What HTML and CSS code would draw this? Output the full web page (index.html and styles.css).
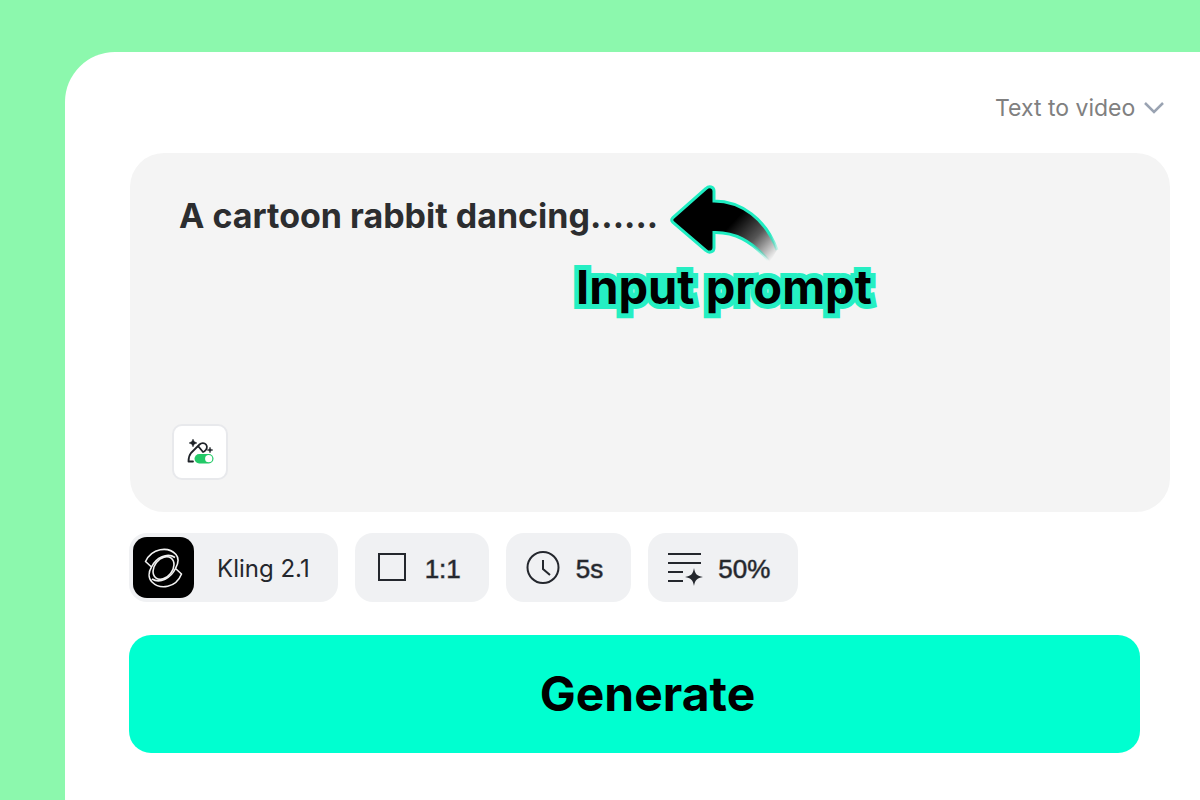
FILE: index.html
```html
<!DOCTYPE html>
<html lang="en">
<head>
    <meta charset="UTF-8">
    <meta name="viewport" content="width=device-width, initial-scale=1.0">
    <title>Text to video</title>
    <link rel="stylesheet" href="styles.css">
</head>
<body>

    <main class="panel">
        <form class="generator">
            <!-- Mode switch -->
            <div class="mode">
                <select class="mode-select" aria-label="Mode">
                    <option>Text to video</option>
                </select>
                <svg class="mode-arrow" viewBox="0 0 20 20" aria-hidden="true">
                    <path d="M1 5l9 9 9-9" fill="none" stroke="#9aa3b2" stroke-width="2.500"/>
                </svg>
            </div>

            <!-- Prompt box -->
            <div class="prompt-box">
                <textarea class="prompt" aria-label="Prompt" spellcheck="false">A cartoon rabbit dancing......</textarea>
                <button class="enhance" type="button" aria-label="Enhance prompt">
                    <svg viewBox="0 0 28 28" aria-hidden="true">
                        <g fill="none" stroke="#1f2329" stroke-width="1.800" stroke-linejoin="round" stroke-linecap="round">
                            <path d="M7 23.500H2.500C2.500 19.500 3 17.500 5 15L13.500 6.500C15.500 4.500 18.500 4.800 20 6.500C21.700 8.500 21 11.500 18.500 13.200L17 14L12.500 8.500"/>
                        </g>
                        <path d="M7 1l1.200 2.600L11 5 8.200 6.200 7 9 5.800 6.200 3 5l2.800-1.400zM24 9l.8 2.200L27 12l-2.200.8L24 15l-.8-2.200L21 12l2.200-.8z" fill="#1f2329" stroke="#1f2329" stroke-width=".4"/>
                        <rect x="8.500" y="16" width="19" height="9.500" rx="4.700" fill="#22c967"/>
                        <circle cx="22.700" cy="20.700" r="3.600" fill="#fff"/>
                    </svg>
                </button>

                <!-- Hint drawn over the box -->
                <div class="hint">
                    <svg class="hint-arrow" viewBox="0 0 110 80" aria-hidden="true">
                        <defs>
                            <linearGradient id="fade" gradientUnits="userSpaceOnUse" x1="67" y1="35" x2="106" y2="72">
                                <stop offset="0" stop-color="#000"/>
                                <stop offset="0.5" stop-color="#000" stop-opacity="0.65"/>
                                <stop offset="1" stop-color="#000" stop-opacity="0"/>
                            </linearGradient>
                            <linearGradient id="edge" gradientUnits="userSpaceOnUse" x1="92" y1="54" x2="104" y2="74">
                                <stop offset="0" stop-color="#1fedc2"/>
                                <stop offset="1" stop-color="#1fedc2" stop-opacity="0"/>
                            </linearGradient>
                        </defs>
                        <path d="M4 33.500Q1.500 36 4 38.500L37 66.500C40 69.500 45 68 45 64V48.500C65 48 82 56 101 78L108 66C99 37 72 16 45 17V7C45 2.500 40 1.500 37 4.500Z" fill="url(#fade)"/>
                        <path d="M101 78C82 56 65 48 45 48.500V64C45 68 40 69.500 37 66.500L4 38.500Q1.500 36 4 33.500L37 4.500C40 1.500 45 2.500 45 7V17C72 17 97 35 108 66" fill="none" stroke="url(#edge)" stroke-width="3"/>
                    </svg>
                    <span class="hint-text">Input prompt</span>
                </div>
            </div>

            <!-- Settings -->
            <div class="options">
                <button class="option model" type="button">
                    <span class="model-logo">
                        <svg viewBox="0 0 40 40" aria-hidden="true">
                            <g fill="none" stroke="#f2f2f2" stroke-width="1.600" stroke-linejoin="round">
                                <ellipse cx="19.500" cy="20" rx="9" ry="12.500" transform="rotate(38 19.500 20)"/>
                                <path d="M7.500 19L1.500 13.500C8 0 24 -2 32 6.500C35 10 34.500 15 31.500 20.500L37.500 26C32 40 16 42 8 34C4 30 4.500 24 7.500 19C12 10 23 4 31 9.500M31.500 20.500C27 30 16 36 8 31"/>
                            </g>
                        </svg>
                    </span>
                    <span class="model-name">Kling 2.1</span>
                </button>
                <button class="option value" type="button">
                    <svg viewBox="0 0 36 36" aria-hidden="true">
                        <rect x="5" y="4" width="26" height="26" fill="none" stroke="#24272d" stroke-width="2"/>
                    </svg>
                    <span>1:1</span>
                </button>
                <button class="option value" type="button">
                    <svg viewBox="0 0 36 36" aria-hidden="true">
                        <g fill="none" stroke="#24272d" stroke-width="2">
                            <circle cx="18" cy="17.500" r="15.500"/>
                            <path d="M18 10v9l7 6"/>
                        </g>
                    </svg>
                    <span>5s</span>
                </button>
                <button class="option value" type="button">
                    <svg viewBox="0 0 36 36" aria-hidden="true">
                        <path d="M1 4h33M1 13h33M1 22h15M1 31h15" stroke="#24272d" stroke-width="2"/>
                        <path d="M27 18C28 24 30 26 36 27C30 28 28 30 27 36C26 30 24 28 18 27C24 26 26 24 27 18Z" fill="#24272d"/>
                    </svg>
                    <span>50%</span>
                </button>
            </div>

            <button class="generate" type="submit">Generate</button>
        </form>
    </main>

</body>
</html>
```
FILE: styles.css
```css
* {
    box-sizing: border-box;
}

body {
    margin: 0;
    background-color: #8cf8ad;
    font-family: Inter, sans-serif;
    color: #24272d;
}

button, select, textarea {
    margin: 0;
    padding: 0;
    border: none;
    background: none;
    font-family: inherit;
    color: inherit;
}

button {
    cursor: pointer;
}

.panel {
    min-height: calc(100vh - 52px);
    margin: 52px 0 0 65px;
    padding: 36px 30px 40px 64px;
    background-color: #fff;
    border-top-left-radius: 50px;
}

.generator {
    display: flex;
    flex-direction: column;
}

/* Mode switch */
.mode {
    display: flex;
    align-items: center;
    align-self: flex-end;
    gap: 8px;
    height: 40px;
    margin: 0 6px 25px 0;
}

.mode-select {
    appearance: none;
    font-size: 23px;
    font-weight: 400;
    color: #808080;
}

.mode-arrow {
    width: 20px;
    height: 20px;
}

/* Prompt box */
.prompt-box {
    position: relative;
    display: flex;
    flex-direction: column;
    align-items: flex-start;
    min-height: 359px;
    margin-left: 1px;
    padding: 40px 42px 32px;
    background-color: #f4f4f4;
    border-radius: 34px;
}

.prompt {
    flex: 1;
    width: 100%;
    padding: 0 7px;
    font-size: 34px;
    font-weight: 700;
    line-height: 46px;
    color: #2c2d2f;
    resize: none;
    outline: none;
}

.enhance {
    display: flex;
    align-items: center;
    justify-content: center;
    width: 56px;
    height: 56px;
    background-color: #fff;
    border: 2px solid #e8e9ec;
    border-radius: 10px;
}

.enhance svg {
    width: 28px;
    height: 28px;
}

/* Hint over the prompt */
.hint {
    position: absolute;
    top: 31px;
    left: 446px;
    display: flex;
    flex-direction: column;
    align-items: center;
    pointer-events: none;
}

.hint-arrow {
    width: 110px;
    height: 80px;
}

.hint-text {
    font-size: 47px;
    font-weight: 700;
    line-height: 46px;
    color: #000;
    -webkit-text-stroke: 10px #25efc3;
    paint-order: stroke fill;
}

/* Settings */
.options {
    display: flex;
    flex-wrap: wrap;
    gap: 17px;
    margin: 21px 0 33px;
}

.option {
    display: flex;
    align-items: center;
    height: 69px;
    background-color: #f0f1f3;
    border-radius: 18px;
}

.model {
    gap: 23px;
    padding: 0 28px 0 4px;
    font-size: 24px;
}

.model-name {
    padding-top: 2px;
}

.model-logo {
    display: flex;
    align-items: center;
    justify-content: center;
    width: 61px;
    height: 61px;
    background-color: #000;
    border-radius: 14px;
}

.model-logo svg {
    width: 40px;
    height: 40px;
}

.value {
    gap: 15px;
    padding: 0 28px 0 19px;
    font-family: "Liberation Sans", sans-serif;
    font-size: 26px;
    -webkit-text-stroke: 1px rgba(36, 39, 45, 0.5);
}

.value span {
    padding-top: 4px;
}

.value svg {
    width: 36px;
    height: 36px;
}

/* Generate */
.generate {
    height: 118px;
    margin-right: 30px;
    padding: 0 0 2px 26px;
    background-color: #00ffd0;
    border-radius: 22px;
    font-size: 48px;
    font-weight: 700;
    color: #000;
}
```
